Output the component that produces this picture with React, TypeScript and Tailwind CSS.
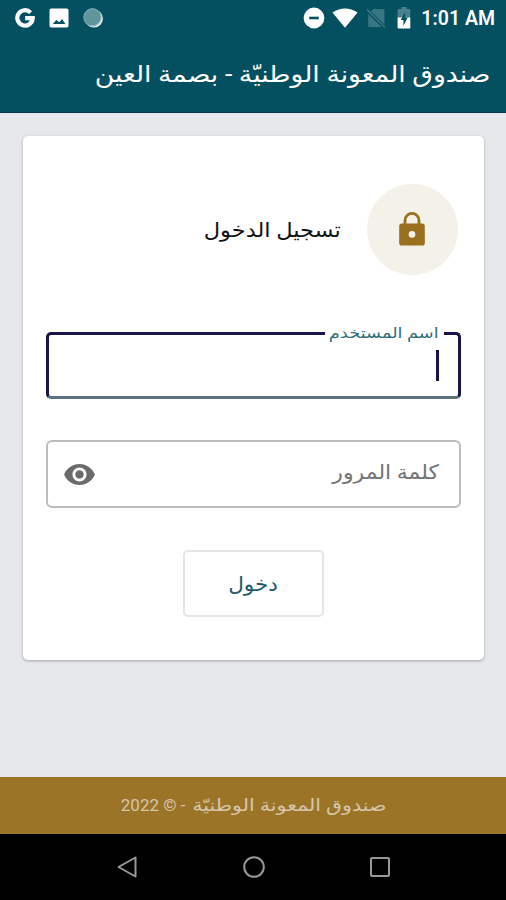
import React from 'react';

const GoogleIcon = () => (
  <svg viewBox="0 0 20 20" className="w-5 h-5">
    <path
      d="M15.6 4.6A7.7 7.7 0 1 0 17.7 10.2H10.2"
      fill="none"
      stroke="#fff"
      strokeWidth="4.2"
    />
  </svg>
);

const ImageIcon = () => (
  <svg viewBox="0 0 20 20" className="w-5 h-5">
    <path
      fillRule="evenodd"
      fill="#fff"
      d="M2.2 0.5H17.8Q19.5 0.5 19.5 2.2V17.8Q19.5 19.5 17.8 19.5H2.2Q0.5 19.5 0.5 17.8V2.2Q0.5 0.5 2.2 0.5ZM3.8 16H16.4L13 11L10.4 14.2L7.3 12Z"
    />
  </svg>
);

const SyncIcon = () => (
  <svg viewBox="0 0 20 20" className="w-5 h-5">
    <circle cx="10.9" cy="10.6" r="9" fill="#e4eff1" />
    <circle cx="9.3" cy="9" r="8.6" fill="#5f959d" />
    <circle cx="9.5" cy="9.4" r="8.7" fill="none" stroke="#86afb5" strokeWidth="1" />
  </svg>
);

const DoNotDisturbIcon = () => (
  <svg viewBox="0 0 22 22" className="w-[22px] h-[22px]">
    <circle cx="11" cy="11" r="10.4" fill="#fff" />
    <path d="M6.2 11H15.8" stroke="#045061" strokeWidth="2.6" />
  </svg>
);

const WifiIcon = () => (
  <svg viewBox="0 0 26 20" className="w-[26px] h-5">
    <path fill="#fff" d="M0.4 4.4Q13-3.6 25.6 4.4L13 19.8Z" />
  </svg>
);

const NoSimIcon = () => (
  <svg viewBox="0 0 20 20" className="w-5 h-5">
    <path fill="#397684" d="M7.5 1H17.4Q18.4 1 18.4 2V16.4L5 3.2ZM2.2 6L15.7 19H3.2Q2.2 19 2.2 18Z" />
    <path d="M0.9 1.4L18.9 19.3" stroke="#397684" strokeWidth="1.6" />
  </svg>
);

const BatteryIcon = () => (
  <svg viewBox="0 0 14 22" className="w-3.5 h-[22px]">
    <path fill="#48808b" d="M4.4 0H9.4V2H12Q13.3 2 13.3 3.3V11H0.6V3.3Q0.6 2 2 2H4.4Z" />
    <path fill="#fff" d="M0.6 10.5H13.3V20.2Q13.3 21.5 12 21.5H2Q0.6 21.5 0.6 20.2Z" />
    <path fill="#045061" d="M8.2 5L3.7 13H6.4V18.8L10.8 10.5H8.2Z" />
  </svg>
);

const LockIcon = () => (
  <svg viewBox="0 0 26 34" className="w-[26px] h-[34px] -translate-x-px -translate-y-px">
    <path d="M6 13V8.4A7 7 0 0 1 20 8.4V13" fill="none" stroke="#98701f" strokeWidth="2.8" />
    <rect x="0.2" y="11.6" width="25.6" height="22" rx="2.6" fill="#98701f" />
    <circle cx="13" cy="22.4" r="3.3" fill="#f5f2ea" />
  </svg>
);

const EyeIcon = () => (
  <svg viewBox="1 4.5 22 15" className="w-[31px] h-[21px]">
    <path
      fill="#6b6b6b"
      d="M12 4.5C7 4.5 2.73 7.61 1 12c1.73 4.39 6 7.5 11 7.5s9.27-3.11 11-7.5c-1.73-4.39-6-7.5-11-7.5zM12 17c-2.76 0-5-2.24-5-5s2.24-5 5-5 5 2.24 5 5-2.24 5-5 5zm0-8c-1.66 0-3 1.34-3 3s1.34 3 3 3 3-1.34 3-3-1.34-3-3-3z"
    />
  </svg>
);

const StatusBar = () => (
  <div dir="ltr" className="h-[35px] flex items-center justify-between pl-[15px] pr-[11px]">
    <div className="flex items-center gap-[14px]">
      <GoogleIcon />
      <ImageIcon />
      <SyncIcon />
    </div>
    <div className="flex items-center">
      <DoNotDisturbIcon />
      <span className="ml-[7px]"><WifiIcon /></span>
      <span className="ml-[8px]"><NoSimIcon /></span>
      <span className="ml-[11px]"><BatteryIcon /></span>
      <span className="ml-[10px] pt-[3px] font-[Roboto] font-semibold text-[19.5px] leading-5 text-white whitespace-nowrap">
        1:01 AM
      </span>
    </div>
  </div>
);

const NavigationBar = () => (
  <nav dir="ltr" className="h-[66px] bg-black flex items-center justify-between pl-[116px] pr-[115px]">
    <svg viewBox="0 0 22 24" className="w-[22px] h-6">
      <path d="M2.5 12L19.5 2.5V21.5Z" fill="none" stroke="#989898" strokeWidth="2" strokeLinejoin="round" />
    </svg>
    <svg viewBox="0 0 24 24" className="w-6 h-6">
      <circle cx="12" cy="12" r="9.8" fill="none" stroke="#989898" strokeWidth="2" />
    </svg>
    <svg viewBox="0 0 22 22" className="w-[22px] h-[22px]">
      <rect x="2" y="2" width="18" height="18" rx="1" fill="none" stroke="#989898" strokeWidth="2" />
    </svg>
  </nav>
);

const App: React.FC = () => (
  <div
    dir="rtl"
    className="w-[506px] h-[900px] flex flex-col overflow-hidden bg-[#e7e8ec] font-[Roboto,'DejaVu_Sans',sans-serif]"
  >
    <header className="h-[113px] bg-[#045061] border-b border-[#08384f]">
      <StatusBar />
      <h1 className="h-[77px] flex items-center pt-1 pr-4 text-[23px] text-white whitespace-nowrap">
        <span className="origin-right scale-x-[1.159]">صندوق المعونة الوطنيّة - بصمة العين</span>
      </h1>
    </header>

    <main className="flex-1 pt-[23px] px-[22px]">
      <section className="h-[524px] ml-px rounded-[5px] bg-white px-[23px] pt-[48px] shadow-[0_1px_3px_rgba(0,0,0,0.3)]">
        <div className="flex items-center gap-[26px] pr-[3px]">
          <div className="w-[91px] h-[91px] rounded-full bg-[#f3f1e8] flex items-center justify-center">
            <LockIcon />
          </div>
          <h2 className="text-[20px] text-[#111] whitespace-nowrap">
            <span className="inline-block origin-right scale-x-[1.125]">تسجيل الدخول</span>
          </h2>
        </div>

        <div className="relative mt-[57px] h-[67px] rounded-[5px] border-[3px] border-[#191548] border-b-[#5c737d] flex items-start pt-[15px] pr-[19px]">
          <label className="absolute -top-[14px] right-[14px] w-[119px] h-6 bg-white flex items-center pr-[5px] text-[15px] text-[#326f78] whitespace-nowrap">
            <span className="origin-right scale-x-[1.185]">اسم المستخدم</span>
          </label>
          <span className="w-[3px] h-[31px] bg-[#191548]" />
        </div>

        <div className="mt-[41px] h-[68px] rounded-[6px] border-2 border-[#bcbcbc] flex items-center justify-between pr-[20px] pl-[16px]">
          <label className="pb-1 text-[20px] text-[#747474] whitespace-nowrap">
            <span className="inline-block origin-right scale-x-[1.1]">كلمة المرور</span>
          </label>
          <EyeIcon />
        </div>

        <div className="mt-[42px] flex justify-center">
          <button className="w-[141px] h-[67px] rounded-[5px] border-2 border-[#e5e5e6] text-[20px] text-[#1e5c68]">
            <span className="inline-block scale-x-[1.08]">دخول</span>
          </button>
        </div>
      </section>
    </main>

    <footer className="h-[57px] bg-[#9b7428] flex items-center pr-[120px] text-[17px] text-[#d6c7ab] whitespace-nowrap">
      <span className="origin-right scale-x-[1.21]">صندوق المعونة الوطنيّة</span>
      <span className="mr-[40px]">- © 2022</span>
    </footer>
    <NavigationBar />
  </div>
);

export default App;
